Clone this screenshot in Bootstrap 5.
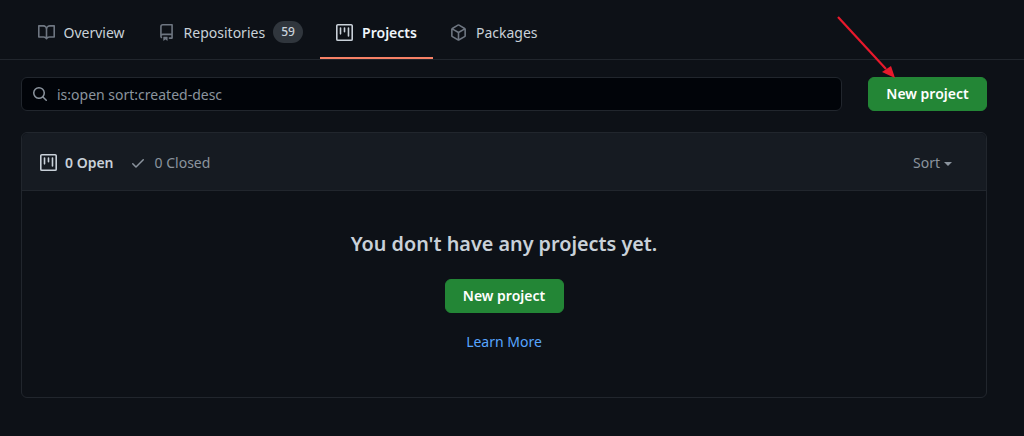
<!DOCTYPE html>
<html lang="en">
<head>
    <meta charset="UTF-8">
    <meta name="viewport" content="width=device-width, initial-scale=1.0">
    <title>Projects</title>
    <link rel="stylesheet" href="https://cdn.jsdelivr.net/npm/bootstrap@5.3.0/dist/css/bootstrap.min.css">
    <style>
        body {
            font-family: "Noto Sans", "Open Sans", sans-serif;
            font-size: 14px;
            background-color: #0d1117;
            color: #c9d1d9;
            height: 436px;
            overflow: hidden;
            position: relative;
        }
        .tabs-bar {
            height: 60px;
            padding: 5px 0 0 21px;
            border-bottom: 1px solid #21262d;
        }
        .tab-item {
            height: 54px;
            padding: 2px 16.5px 0;
            color: #c9d1d9;
            text-decoration: none;
            gap: 9px;
            border-bottom: 2px solid transparent;
        }
        .tab-item svg { fill: #6e7681; }
        .tab-item.current {
            color: #f0f6fc;
            font-weight: 600;
            border-bottom-color: #f78166;
        }
        .tab-item.current svg { fill: #c9d1d9; }
        .count-pill {
            background-color: #30363d;
            color: #c9d1d9;
            border-radius: 2em;
            font-size: 12px;
            font-weight: 500;
            line-height: 22px;
            width: 30px;
            text-align: center;
            margin-left: -1px;
        }
        .page-body { padding: 17px 37px 0 21px; }
        .search-box {
            height: 34px;
            background-color: #010409;
            border: 1px solid #21262d;
            border-radius: 6px;
            padding-left: 10px;
            gap: 9px;
            color: #8b949e;
        }
        .search-box svg { fill: #8b949e; }
        .green-btn {
            background-color: #238636;
            border: 1px solid #238636;
            color: #fff;
            font-size: 14px;
            font-weight: 600;
            line-height: 20px;
            border-radius: 6px;
            padding: 6px 0;
            width: 119px;
            height: 34px;
        }
        .green-btn:hover { background-color: #2ea043; color: #fff; }
        .search-gap { margin-left: 26px; }
        .project-box {
            margin-top: 21px;
            height: 266px;
            background-color: transparent;
            border: 1px solid #21262d;
            border-radius: 6px;
        }
        .box-head {
            height: 58px;
            background-color: #161b22;
            border-bottom: 1px solid #21262d;
            border-radius: 6px 6px 0 0;
            padding: 2px 34px 0 18px;
        }
        .state-open { color: #c9d1d9; font-weight: 600; gap: 8px; }
        .state-open svg { fill: #c9d1d9; }
        .state-closed { color: #8b949e; gap: 9px; margin-left: 16px; }
        .state-closed svg { fill: #8b949e; }
        .sort-label { color: #8b949e; }
        .sort-caret {
            display: inline-block;
            margin-left: 4px;
            vertical-align: middle;
            border-top: 4px solid #8b949e;
            border-left: 4px solid transparent;
            border-right: 4px solid transparent;
        }
        .blank-title {
            font-size: 19.8px;
            font-weight: 600;
            line-height: 30px;
            margin: 38px 0 0;
            color: #c9d1d9;
        }
        .blank-btn { margin-top: 20px; }
        .learn-row { margin-top: 18px; }
        .learn-link { color: #58a6ff; text-decoration: none; line-height: 20px; }
        .red-arrow { position: absolute; left: 830px; top: 10px; }
    </style>
</head>
<body>
    <nav class="tabs-bar d-flex">
        <a class="tab-item d-flex align-items-center" href="#">
            <svg width="17" height="17" viewBox="0 0 16 16"><path d="M0 1.75A.75.75 0 0 1 .75 1h4.253c1.227 0 2.317.59 3 1.501A3.743 3.743 0 0 1 11.006 1h4.245a.75.75 0 0 1 .75.75v10.5a.75.75 0 0 1-.75.75h-4.507a2.25 2.25 0 0 0-1.591.659l-.622.621a.75.75 0 0 1-1.06 0l-.622-.621A2.25 2.25 0 0 0 5.258 13H.75a.75.75 0 0 1-.75-.75Zm7.251 10.324.004-5.073-.002-2.253A2.25 2.25 0 0 0 5.003 2.5H1.5v9h3.757a3.75 3.75 0 0 1 1.994.574ZM8.755 4.75l-.004 7.322a3.752 3.752 0 0 1 1.992-.572H14.5v-9h-3.495a2.25 2.25 0 0 0-2.25 2.25Z"/></svg>
            Overview
        </a>
        <a class="tab-item d-flex align-items-center" href="#">
            <svg width="17" height="17" viewBox="0 0 16 16"><path d="M2 2.5A2.5 2.5 0 0 1 4.5 0h8.75a.75.75 0 0 1 .75.75v12.5a.75.75 0 0 1-.75.75h-2.5a.75.75 0 0 1 0-1.5h1.75v-2h-8a1 1 0 0 0-.714 1.7.75.75 0 1 1-1.072 1.05A2.495 2.495 0 0 1 2 11.5Zm10.5-1h-8a1 1 0 0 0-1 1v6.708A2.486 2.486 0 0 1 4.5 9h8ZM5 12.25a.25.25 0 0 1 .25-.25h3.5a.25.25 0 0 1 .25.25v3.25a.25.25 0 0 1-.4.2l-1.45-1.087a.249.249 0 0 0-.3 0L5.4 15.7a.25.25 0 0 1-.4-.2Z"/></svg>
            Repositories
            <span class="count-pill">59</span>
        </a>
        <a class="tab-item current d-flex align-items-center" href="#">
            <svg width="17" height="17" viewBox="0 0 16 16"><path d="M1.75 0h12.5C15.216 0 16 .784 16 1.75v12.5A1.75 1.75 0 0 1 14.25 16H1.75A1.75 1.75 0 0 1 0 14.25V1.75C0 .784.784 0 1.75 0ZM1.5 1.75v12.5c0 .138.112.25.25.25h12.5a.25.25 0 0 0 .25-.25V1.75a.25.25 0 0 0-.25-.25H1.75a.25.25 0 0 0-.25.25ZM11.75 3a.75.75 0 0 1 .75.75v7.5a.75.75 0 0 1-1.5 0v-7.5a.75.75 0 0 1 .75-.75Zm-8.25.75a.75.75 0 0 1 1.5 0v5.5a.75.75 0 0 1-1.5 0ZM8 3a.75.75 0 0 1 .75.75v3.5a.75.75 0 0 1-1.5 0v-3.5A.75.75 0 0 1 8 3Z"/></svg>
            Projects
        </a>
        <a class="tab-item d-flex align-items-center" href="#">
            <svg width="17" height="17" viewBox="0 0 16 16"><path d="m8.878.392 5.25 3.045c.54.314.872.89.872 1.514v6.098a1.75 1.75 0 0 1-.872 1.514l-5.25 3.045a1.75 1.75 0 0 1-1.756 0l-5.25-3.045A1.75 1.75 0 0 1 1 11.049V4.951c0-.624.332-1.201.872-1.514L7.122.392a1.75 1.75 0 0 1 1.756 0ZM7.875 1.69l-4.63 2.685L8 7.133l4.755-2.758-4.63-2.685a.248.248 0 0 0-.25 0ZM2.5 5.677v5.372c0 .09.047.171.125.216l4.625 2.683V8.432Zm6.25 8.271 4.625-2.683a.25.25 0 0 0 .125-.216V5.677L8.75 8.432Z"/></svg>
            Packages
        </a>
    </nav>

    <div class="page-body">
        <div class="d-flex align-items-center">
            <div class="search-box d-flex align-items-center flex-grow-1">
                <svg width="16" height="16" viewBox="0 0 16 16"><path d="M10.68 11.74a6 6 0 0 1-7.922-8.982 6 6 0 0 1 8.982 7.922l3.04 3.04a.749.749 0 0 1-.326 1.275.749.749 0 0 1-.734-.215ZM11.5 7a4.499 4.499 0 1 0-8.997 0A4.499 4.499 0 0 0 11.5 7Z"/></svg>
                <span>is:open sort:created-desc</span>
            </div>
            <button class="btn green-btn search-gap flex-shrink-0" type="button">New project</button>
        </div>

        <div class="project-box">
            <div class="box-head d-flex align-items-center justify-content-between">
                <div class="d-flex align-items-center">
                    <span class="state-open d-flex align-items-center">
                        <svg width="17" height="17" viewBox="0 0 16 16"><path d="M1.75 0h12.5C15.216 0 16 .784 16 1.75v12.5A1.75 1.75 0 0 1 14.25 16H1.75A1.75 1.75 0 0 1 0 14.25V1.75C0 .784.784 0 1.75 0ZM1.5 1.75v12.5c0 .138.112.25.25.25h12.5a.25.25 0 0 0 .25-.25V1.75a.25.25 0 0 0-.25-.25H1.75a.25.25 0 0 0-.25.25ZM11.75 3a.75.75 0 0 1 .75.75v7.5a.75.75 0 0 1-1.5 0v-7.5a.75.75 0 0 1 .75-.75Zm-8.25.75a.75.75 0 0 1 1.5 0v5.5a.75.75 0 0 1-1.5 0ZM8 3a.75.75 0 0 1 .75.75v3.5a.75.75 0 0 1-1.5 0v-3.5A.75.75 0 0 1 8 3Z"/></svg>
                        0 Open
                    </span>
                    <span class="state-closed d-flex align-items-center">
                        <svg width="16" height="16" viewBox="0 0 16 16"><path d="M13.78 4.22a.75.75 0 0 1 0 1.06l-7.25 7.25a.75.75 0 0 1-1.06 0L2.22 9.28a.751.751 0 0 1 .018-1.042.751.751 0 0 1 1.042-.018L6 10.94l6.72-6.72a.75.75 0 0 1 1.06 0Z"/></svg>
                        0 Closed
                    </span>
                </div>
                <span class="sort-label">Sort<span class="sort-caret"></span></span>
            </div>
            <div class="text-center">
                <h3 class="blank-title">You don't have any projects yet.</h3>
                <button class="btn green-btn blank-btn" type="button">New project</button>
                <div class="learn-row"><a class="learn-link" href="#">Learn More</a></div>
            </div>
        </div>
    </div>

    <svg class="red-arrow" width="70" height="75" viewBox="0 0 70 75">
        <line x1="8" y1="7" x2="56" y2="59" stroke="#e8192c" stroke-width="2.2"/>
        <polygon points="65,68 52,62 61,56" fill="#e8192c"/>
    </svg>
</body>
</html>
